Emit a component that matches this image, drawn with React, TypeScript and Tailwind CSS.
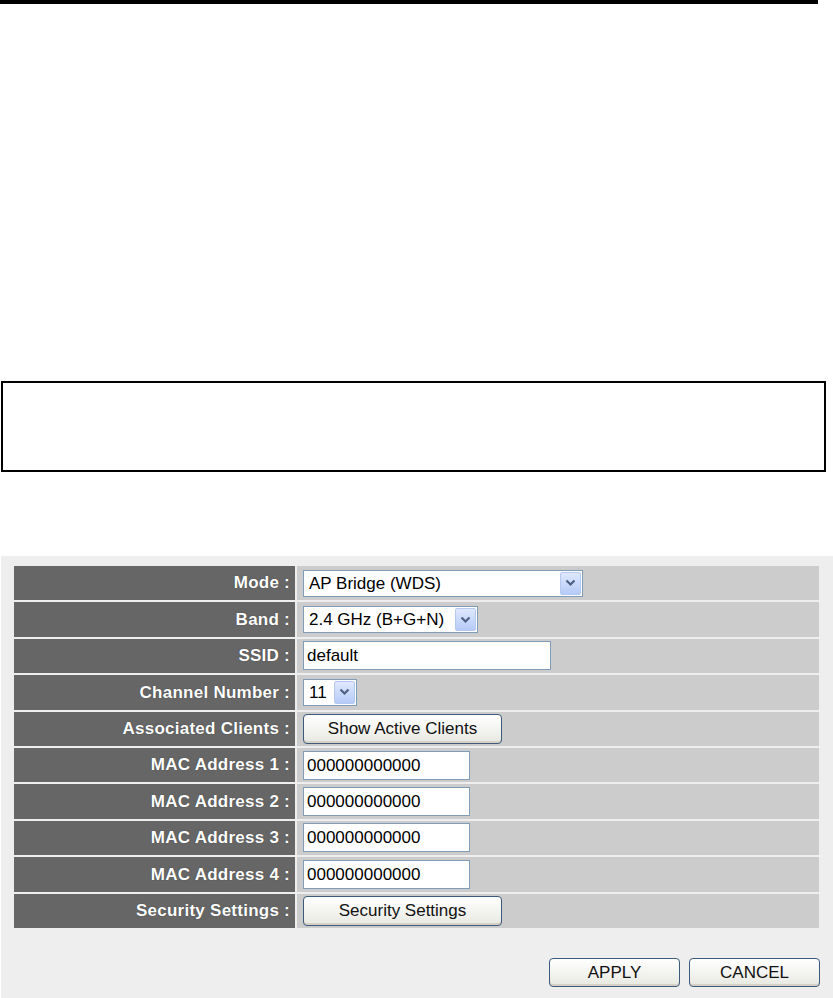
import type { ReactNode } from 'react';

function Arrow() {
  return (
    <span className="flex h-full w-[21px] items-center justify-center rounded-[2px] border border-[#b5c8f0] bg-gradient-to-b from-[#dfe8fd] to-[#b5cbf7]">
      <svg width="11" height="8" viewBox="0 0 11 8">
        <path d="M1.5 1.5 L5.5 5.5 L9.5 1.5" fill="none" stroke="#4d6185" strokeWidth="2.2" />
      </svg>
    </span>
  );
}

function Select({ value, width }: { value: string; width: string }) {
  return (
    <div className={`flex h-[27px] items-center border border-[#7f9db9] bg-white p-[1px] ${width}`}>
      <span className="flex-1 pl-[4px] text-[17px] leading-none text-black">{value}</span>
      <Arrow />
    </div>
  );
}

function TextBox({ value, width }: { value: string; width: string }) {
  return (
    <div className={`flex h-[29px] items-center border border-[#7f9db9] bg-white pl-[3px] text-[17px] leading-none text-black ${width}`}>
      {value}
    </div>
  );
}

function Btn({ label, width, h = 'h-[30px]' }: { label: string; width: string; h?: string }) {
  return (
    <button className={`flex items-center justify-center rounded-[4px] border border-[#3c5a7c] bg-gradient-to-b from-white to-[#e8e8e2] text-[17px] leading-none text-[#111] shadow-[inset_0_-2px_0_#d6d0c5] ${width} ${h}`}>
      {label}
    </button>
  );
}

const rows: { label: string; field: ReactNode }[] = [
  { label: 'Mode :', field: <Select value="AP Bridge (WDS)" width="w-[280px]" /> },
  { label: 'Band :', field: <Select value="2.4 GHz (B+G+N)" width="w-[175px]" /> },
  { label: 'SSID :', field: <TextBox value="default" width="w-[248px]" /> },
  { label: 'Channel Number :', field: <Select value="11" width="w-[54px]" /> },
  { label: 'Associated Clients :', field: <Btn label="Show Active Clients" width="w-[199px]" /> },
  { label: 'MAC Address 1 :', field: <TextBox value="000000000000" width="w-[167px]" /> },
  { label: 'MAC Address 2 :', field: <TextBox value="000000000000" width="w-[167px]" /> },
  { label: 'MAC Address 3 :', field: <TextBox value="000000000000" width="w-[167px]" /> },
  { label: 'MAC Address 4 :', field: <TextBox value="000000000000" width="w-[167px]" /> },
  { label: 'Security Settings :', field: <Btn label="Security Settings" width="w-[199px]" /> },
];

export default function App() {
  return (
    <div className="relative h-[998px] w-[833px] overflow-hidden bg-white font-['Liberation_Sans',Arial,sans-serif]">
      <div className="h-[4px] w-[818px] bg-black" />

      <div className="ml-[1px] mt-[377px] h-[91px] w-[825px] border-2 border-black" />

      <div className="ml-[1px] mt-[84px] h-[443px] w-[832px] bg-[#eeeeee] pl-[13px] pt-[10px]">
        <div className="flex w-[805px] flex-col gap-[2px]">
          {rows.map((r) => (
            <div key={r.label} className="flex h-[34.4px] gap-[2px]">
              <div className="flex w-[281px] items-center justify-end bg-[#666666] pr-[5px] text-[17px] font-bold tracking-[0.25px] text-white [text-shadow:0_0_1px_#333]">
                {r.label}
              </div>
              <div className="flex flex-1 items-center bg-[#cccccc] pl-[6px]">{r.field}</div>
            </div>
          ))}
        </div>

        <div className="mt-[30px] flex w-[806px] justify-end gap-[9px]">
          <Btn label="APPLY" width="w-[131px]" h="h-[29px]" />
          <Btn label="CANCEL" width="w-[131px]" h="h-[29px]" />
        </div>
      </div>
    </div>
  );
}
